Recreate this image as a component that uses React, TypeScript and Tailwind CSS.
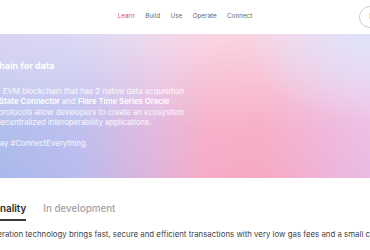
import React from "react";

export default function App() {
  return (
    <div
      className="w-[370px] h-[250px] overflow-hidden bg-white relative"
      style={{ fontFamily: "Inter, 'Liberation Sans', Arial, sans-serif" }}
    >
      {/* Header */}
      <header className="h-[34px] grid grid-cols-[minmax(0,1fr)_auto_minmax(0,1fr)] items-center bg-white">
        <div />
        <nav className="flex items-center gap-[10.5px] text-[6.3px] text-[#666666]">
          <span className="text-[#d9477a]">Learn</span>
          <span>Build</span>
          <span>Use</span>
          <span>Operate</span>
          <span>Connect</span>
        </nav>
        <div className="min-w-0 flex justify-start pl-[107px]">
          <div className="shrink-0 w-[60px] h-[22px] rounded-full border border-[#cfcfcf] flex items-center pl-[9px] text-[7px] text-[#e0632f]">
            Launch
          </div>
        </div>
      </header>

      {/* Hero */}
      <section className="h-[144px] bg-[image:radial-gradient(ellipse_35%_60%_at_100%_0%,rgba(221,227,250,0.95),rgba(221,227,250,0)),radial-gradient(ellipse_35%_70%_at_0%_0%,rgba(220,208,240,0.7),rgba(220,208,240,0)),linear-gradient(to_bottom,rgba(255,255,255,0.5),rgba(255,255,255,0.08)_65%,rgba(255,255,255,0)),linear-gradient(to_right,#a9b9ea_0%,#b8bbee_20%,#e0b4db_42%,#f6abc7_56%,#f6a9c3_70%,#efb3d8_88%,#ebbbe3_100%)] overflow-hidden">
        <div className="-ml-[56px] pt-[25px] text-white">
          <h1 className="ml-[7px] text-[9px] leading-[13px] font-bold whitespace-nowrap">
            The blockchain for data
          </h1>
          <p className="mt-[14px] text-[7.75px] leading-[10.3px] whitespace-nowrap text-white/90">
            <span className="inline-block w-[59px]"></span>EVM blockchain that has 2 native data acquisition
            <br />
            <span className="inline-block w-[55px]"></span>
            <span className="font-semibold text-white">State Connector</span> and{" "}
            <span className="font-semibold text-white">Flare Time Series Oracle</span>
            <br />
            <span className="inline-block w-[54px]"></span>protocols allow developers to create an ecosystem
            <br />
            <span className="inline-block w-[52px]"></span>decentralized interoperability applications.
          </p>
          <p className="mt-[11px] text-[7.75px] leading-[10.3px] whitespace-nowrap text-white/90">
            <span className="inline-block w-[51px]"></span>day #ConnectEverything.
          </p>
        </div>
      </section>

      {/* Tabs */}
      <div className="mt-[24px] -ml-[35px] flex items-end gap-[17px] whitespace-nowrap">
        <div className="pb-[3px] border-b-2 border-[#3a3a3a] text-[9.8px] leading-[14px] font-semibold text-[#2b2b2b]">
          Functionality
        </div>
        <div className="pb-[3px] border-b-2 border-transparent text-[9.8px] leading-[14px] font-medium text-[#a3a3a3]">
          In development
        </div>
      </div>

      {/* Body */}
      <p className="mt-[9px] -ml-[63px] text-[7.85px] leading-[9px] text-[#3f3f3f] whitespace-nowrap">
        Flare's next-generation technology brings fast, secure and efficient transactions with very low gas fees and a small carbon footprint.
      </p>
    </div>
  );
}
